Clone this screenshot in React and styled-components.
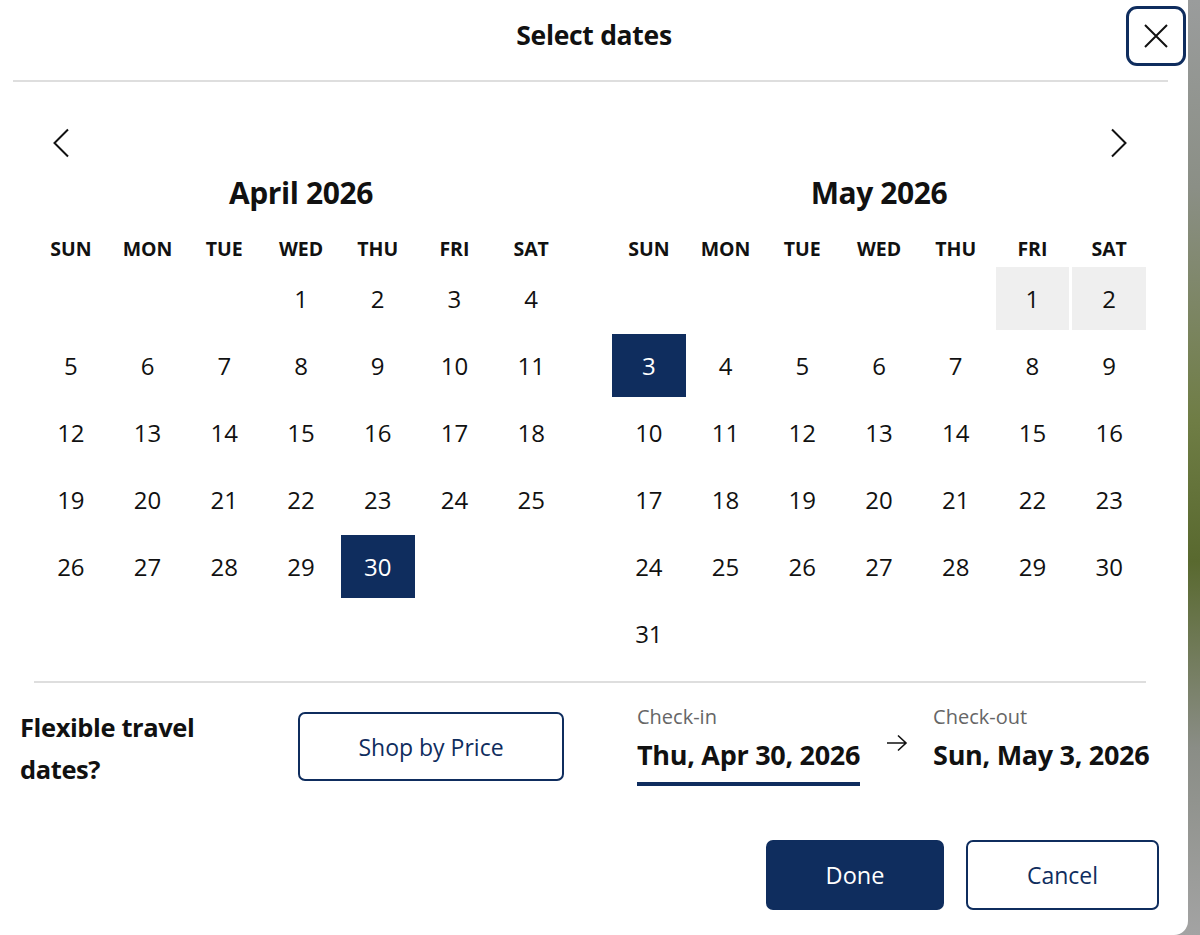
import React from "react";
import styled, { createGlobalStyle } from "styled-components";

const NAVY = "#0f2d5e";

const Global = createGlobalStyle`
  html, body { margin: 0; padding: 0; }
  body {
    width: 1200px;
    height: 935px;
    overflow: hidden;
    font-family: "Open Sans", "Noto Sans", "Liberation Sans", sans-serif;
    color: #111;
    background: linear-gradient(180deg, #9a9c9c 0%, #8b8f86 20%, #6f7d45 45%, #59692f 60%, #8a8d86 80%, #a3a3a3 100%);
  }
  button { font-family: inherit; }
`;

const Modal = styled.div`
  width: 1188px;
  height: 935px;
  background: #fff;
  border-bottom-right-radius: 14px;
  display: flex;
  flex-direction: column;
`;

const Header = styled.div`
  display: grid;
  grid-template-columns: 1fr auto 1fr;
  align-items: start;
  height: 80px;
`;

const Title = styled.h1`
  grid-column: 2;
  margin: 0;
  padding-top: 18px;
  font-size: 26.5px;
  line-height: 34px;
  font-weight: 700;
  letter-spacing: -0.3px;
`;

const CloseButton = styled.button`
  grid-column: 3;
  justify-self: end;
  margin: 6px 2px 0 0;
  width: 60px;
  height: 60px;
  border: 3px solid ${NAVY};
  border-radius: 11px;
  background: #fff;
  display: flex;
  align-items: center;
  justify-content: center;
  padding: 0;
`;

const Divider = styled.div`
  height: 2px;
  background: #dedede;
  margin: ${(p) => p.$margin};
`;

const Body = styled.div`
  padding: 0 42px 0 34px;
`;

const NavRow = styled.div`
  display: flex;
  justify-content: space-between;
  margin-top: 44px;
  height: 34px;
  padding: 0 18px;
`;

const NavButton = styled.button`
  border: none;
  background: none;
  padding: 0;
  width: 18px;
  height: 34px;
  display: flex;
  align-items: center;
  justify-content: center;
`;

const Months = styled.div`
  display: grid;
  grid-template-columns: 1fr 1fr;
  column-gap: 44px;
  margin-top: 16px;
`;

const MonthTitle = styled.h2`
  margin: 0;
  text-align: center;
  font-size: 30px;
  line-height: 34px;
  font-weight: 700;
  letter-spacing: -0.4px;
`;

const Grid = styled.div`
  display: grid;
  grid-template-columns: repeat(7, 1fr);
  column-gap: 3px;
  row-gap: 4px;
`;

const WeekDays = styled(Grid)`
  margin-top: 27px;
  margin-bottom: 6px;
`;

const WeekDay = styled.div`
  text-align: center;
  font-size: 19.5px;
  line-height: 24px;
  font-weight: 700;
`;

const Day = styled.div`
  height: 63px;
  display: flex;
  align-items: center;
  justify-content: center;
  font-size: 24px;
  font-weight: 400;
  background: ${(p) => (p.$selected ? NAVY : p.$muted ? "#efefef" : "transparent")};
  color: ${(p) => (p.$selected ? "#fff" : "#111")};
`;

const Footer = styled.div`
  display: flex;
  align-items: flex-start;
  padding: 22px 0 0 20px;
`;

const FlexText = styled.div`
  width: 278px;
  font-size: 25.5px;
  line-height: 42px;
  font-weight: 700;
  letter-spacing: -0.4px;
  margin-top: 1px;
`;

const OutlineButton = styled.button`
  width: ${(p) => p.$w}px;
  height: ${(p) => p.$h}px;
  border: 2px solid ${NAVY};
  border-radius: 7px;
  background: #fff;
  color: ${NAVY};
  font-size: 23px;
  font-weight: 500;
`;

const FilledButton = styled.button`
  width: ${(p) => p.$w}px;
  height: 70px;
  border: none;
  border-radius: 7px;
  background: ${NAVY};
  color: #fff;
  font-size: 23.5px;
  font-weight: 500;
`;

const ShopWrap = styled.div`
  margin-top: 7px;
`;

const Dates = styled.div`
  display: flex;
  align-items: flex-start;
  margin-left: 73px;
`;

const DateField = styled.div`
  display: flex;
  flex-direction: column;
`;

const DateLabel = styled.div`
  font-size: 20px;
  line-height: 24px;
  color: #666;
`;

const DateValue = styled.div`
  font-size: 27px;
  line-height: 34px;
  font-weight: 700;
  letter-spacing: -0.3px;
  margin-top: 9px;
  white-space: nowrap;
`;

const Underline = styled.div`
  height: 4px;
  background: ${NAVY};
  margin-top: 10px;
`;

const ArrowBox = styled.div`
  width: 73px;
  display: flex;
  justify-content: center;
  padding-top: 29px;
`;

const Actions = styled.div`
  display: flex;
  justify-content: flex-end;
  gap: 22px;
  margin-top: 50px;
  padding-right: 29px;
`;

const april = { offset: 3, days: 30, selected: [30], muted: [] };
const may = { offset: 5, days: 31, selected: [3], muted: [1, 2] };
const WEEK = ["SUN", "MON", "TUE", "WED", "THU", "FRI", "SAT"];

function Month({ title, data }) {
  const cells = [];
  for (let i = 0; i < data.offset; i++) cells.push(<Day key={"e" + i} />);
  for (let d = 1; d <= data.days; d++)
    cells.push(
      <Day key={d} $selected={data.selected.includes(d)} $muted={data.muted.includes(d)}>
        {d}
      </Day>
    );
  return (
    <div>
      <MonthTitle>{title}</MonthTitle>
      <WeekDays>
        {WEEK.map((w) => (
          <WeekDay key={w}>{w}</WeekDay>
        ))}
      </WeekDays>
      <Grid>{cells}</Grid>
    </div>
  );
}

export default function App() {
  return (
    <>
      <Global />
      <Modal>
        <Header>
          <Title>Select dates</Title>
          <CloseButton aria-label="Close">
            <svg width="26" height="26" viewBox="0 0 26 26">
              <path d="M2 2 L24 24 M24 2 L2 24" stroke="#111" strokeWidth="2" fill="none" />
            </svg>
          </CloseButton>
        </Header>
        <Divider $margin="0 20px 0 13px" />
        <Body>
          <NavRow>
            <NavButton aria-label="Previous">
              <svg width="18" height="30" viewBox="0 0 18 30">
                <path d="M16 1.5 L2.5 15 L16 28.5" stroke="#111" strokeWidth="2" fill="none" />
              </svg>
            </NavButton>
            <NavButton aria-label="Next">
              <svg width="18" height="30" viewBox="0 0 18 30">
                <path d="M2 1.5 L15.5 15 L2 28.5" stroke="#111" strokeWidth="2" fill="none" />
              </svg>
            </NavButton>
          </NavRow>
          <Months>
            <Month title="April 2026" data={april} />
            <Month title="May 2026" data={may} />
          </Months>
          <Divider $margin="16px 0 0 0" />
        </Body>
        <Footer>
          <FlexText>
            Flexible travel
            <br />
            dates?
          </FlexText>
          <ShopWrap>
            <OutlineButton $w={266} $h={69}>Shop by Price</OutlineButton>
          </ShopWrap>
          <Dates>
            <DateField>
              <DateLabel>Check-in</DateLabel>
              <DateValue>Thu, Apr 30, 2026</DateValue>
              <Underline />
            </DateField>
            <ArrowBox>
              <svg width="22" height="18" viewBox="0 0 22 18">
                <path d="M1 9 H20 M12 1.5 L20 9 L12 16.5" stroke="#111" strokeWidth="1.6" fill="none" />
              </svg>
            </ArrowBox>
            <DateField>
              <DateLabel>Check-out</DateLabel>
              <DateValue>Sun, May 3, 2026</DateValue>
            </DateField>
          </Dates>
        </Footer>
        <Actions>
          <FilledButton $w={178}>Done</FilledButton>
          <OutlineButton $w={193} $h={70}>Cancel</OutlineButton>
        </Actions>
      </Modal>
    </>
  );
}
